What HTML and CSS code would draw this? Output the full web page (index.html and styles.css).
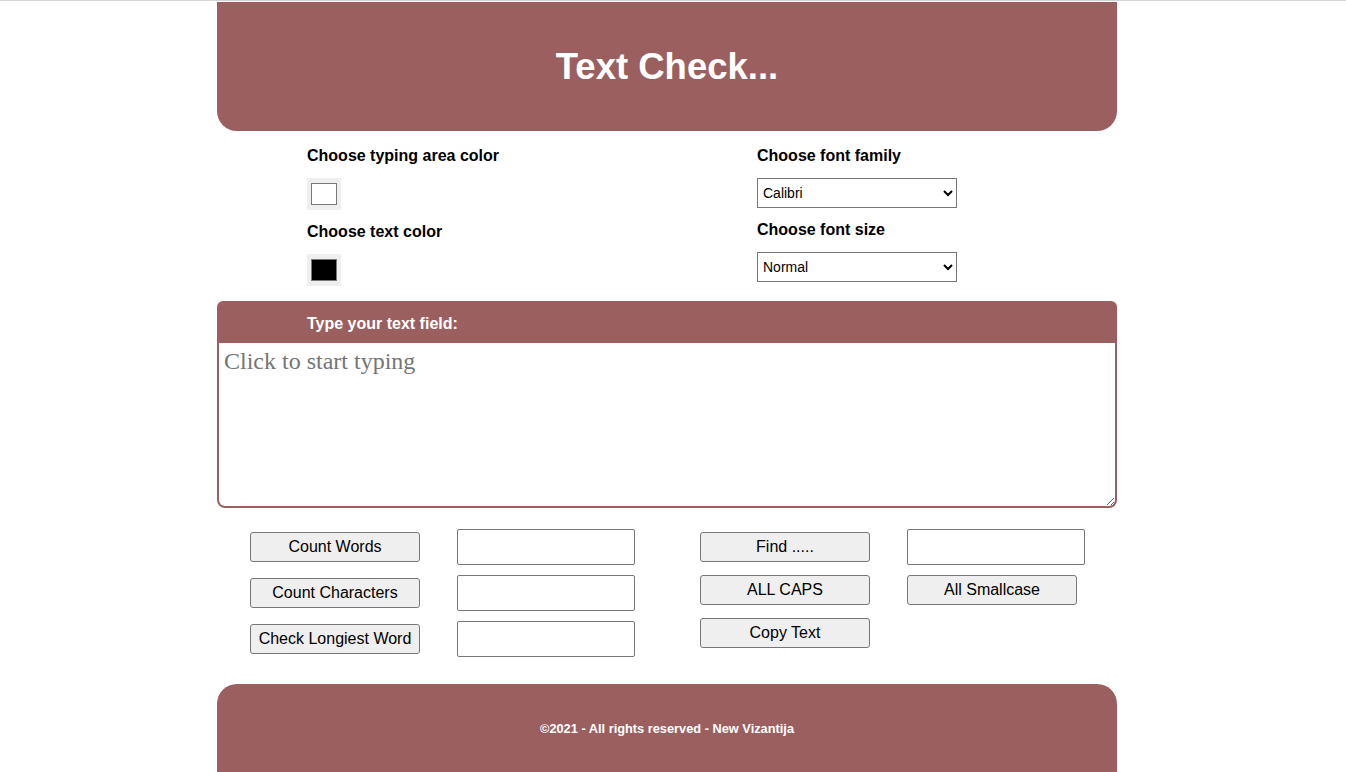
FILE: index.html
```html
<!DOCTYPE html>
<html lang="en">
<head>
<meta charset="utf-8">
<title>Text Check...</title>
<link rel="stylesheet" href="styles.css">
</head>
<body>
<div class="topline"></div>
<div class="page">
  <header class="hero">
    <h1 class="hero-title">Text Check...</h1>
  </header>

  <section class="settings">
    <div class="settings-col">
      <div class="label">Choose typing area color</div>
      <div class="swatch swatch-gap"><span class="swatch-fill swatch-white"></span></div>
      <div class="label">Choose text color</div>
      <div class="swatch"><span class="swatch-fill swatch-black"></span></div>
    </div>
    <div class="settings-col">
      <div class="label">Choose font family</div>
      <select class="select select-gap">
        <option>Calibri</option>
        <option>Arial</option>
        <option>Times New Roman</option>
      </select>
      <div class="label">Choose font size</div>
      <select class="select">
        <option>Normal</option>
        <option>Small</option>
        <option>Large</option>
      </select>
    </div>
  </section>

  <section class="editor">
    <div class="editor-bar">Type your text field:</div>
    <textarea class="editor-area" placeholder="Click to start typing"></textarea>
  </section>

  <section class="tools">
    <div class="tools-col">
      <div class="row row-input">
        <button class="btn">Count Words</button>
        <input class="field" type="text">
      </div>
      <div class="row row-input">
        <button class="btn">Count Characters</button>
        <input class="field" type="text">
      </div>
      <div class="row row-input row-last">
        <button class="btn">Check Longiest Word</button>
        <input class="field" type="text">
      </div>
    </div>
    <div class="tools-col">
      <div class="row row-input">
        <button class="btn">Find .....</button>
        <input class="field" type="text">
      </div>
      <div class="row row-btn">
        <button class="btn">ALL CAPS</button>
        <button class="btn">All Smallcase</button>
      </div>
      <div class="row row-btn row-last">
        <button class="btn">Copy Text</button>
      </div>
    </div>
  </section>

  <footer class="footer">©2021 - All rights reserved - New Vizantija</footer>
</div>
</body>
</html>
```

FILE: styles.css
```css
html, body {
  margin: 0;
  padding: 0;
  background: #ffffff;
  font-family: "Liberation Sans", Arial, sans-serif;
  color: #000000;
}

.topline {
  height: 1px;
  background: #d4d4d4;
  margin-bottom: 1px;
}

.page {
  width: 900px;
  margin-left: 217px;
}

.hero {
  height: 129px;
  background: #9c5f5f;
  border-radius: 0 0 20px 20px;
  display: flex;
  align-items: center;
  justify-content: center;
}

.hero-title {
  margin: 0;
  color: #ffffff;
  font-size: 36.5px;
  font-weight: bold;
  line-height: 42px;
  padding-top: 1px;
}

.settings {
  display: grid;
  grid-template-columns: 450px 450px;
  padding: 15px 0 15px 0;
}

.settings-col {
  padding-left: 90px;
  display: flex;
  flex-direction: column;
  align-items: flex-start;
}

.label {
  font-size: 16px;
  font-weight: bold;
  line-height: 18px;
  padding-top: 1px;
  margin-bottom: 13px;
}

.swatch {
  width: 34px;
  height: 32px;
  background: #efefef;
  box-sizing: border-box;
  padding: 5px 4px;
}

.swatch-gap, .select-gap {
  margin-bottom: 12px;
}

.swatch-fill {
  display: block;
  width: 26px;
  height: 22px;
  box-sizing: border-box;
  border: 1px solid #777777;
}

.swatch-white { background: #ffffff; }
.swatch-black { background: #000000; }

.select {
  width: 200px;
  height: 30px;
  box-sizing: border-box;
  font-family: "Liberation Sans", Arial, sans-serif;
  font-size: 14px;
  color: #000000;
  background: #ffffff;
  border: 1px solid #767676;
  border-radius: 0;
  padding: 0 1px;
}

.editor {
  display: flex;
  flex-direction: column;
}

.editor-bar {
  height: 42px;
  box-sizing: border-box;
  background: #9c5f5f;
  border-radius: 6px 6px 0 0;
  color: #ffffff;
  font-size: 16px;
  font-weight: bold;
  line-height: 38px;
  padding: 4px 0 0 90px;
}

.editor-area {
  display: block;
  width: 900px;
  height: 165px;
  box-sizing: border-box;
  margin: 0;
  border: 2px solid #9c5f5f;
  border-top: none;
  border-radius: 0 0 8px 8px;
  padding: 5px 5px 4px 5px;
  font-family: "Liberation Serif", "Times New Roman", serif;
  font-size: 24px;
  outline: none;
}

.editor-area::placeholder {
  color: #757575;
}

.tools {
  display: grid;
  grid-template-columns: 450px 450px;
  padding: 21px 0 27px 0;
}

.tools-col {
  padding-left: 33px;
  display: flex;
  flex-direction: column;
}

.row {
  display: flex;
  align-items: center;
  gap: 37px;
}

.row-input {
  height: 36px;
  margin-bottom: 10px;
}

.row-btn {
  height: 30px;
  margin-bottom: 13px;
}

.row-last {
  margin-bottom: 0;
}

.btn {
  width: 170px;
  height: 30px;
  box-sizing: border-box;
  margin: 0;
  padding: 1px 4px;
  font-family: "Liberation Sans", Arial, sans-serif;
  font-size: 16px;
  color: #000000;
  background: #efefef;
  border: 1px solid #767676;
  border-radius: 3px;
  white-space: nowrap;
}

.field {
  width: 178px;
  height: 36px;
  box-sizing: border-box;
  margin: 0;
  border: 1px solid #767676;
  border-radius: 2px;
  background: #ffffff;
  font-family: "Liberation Sans", Arial, sans-serif;
  font-size: 16px;
  padding: 2px 4px;
}

.footer {
  background: #9c5f5f;
  border-radius: 20px 20px 0 0;
  color: #ffffff;
  font-size: 12.8px;
  font-weight: bold;
  line-height: 16px;
  padding: 37px 0 35px 0;
  text-align: center;
}
```
